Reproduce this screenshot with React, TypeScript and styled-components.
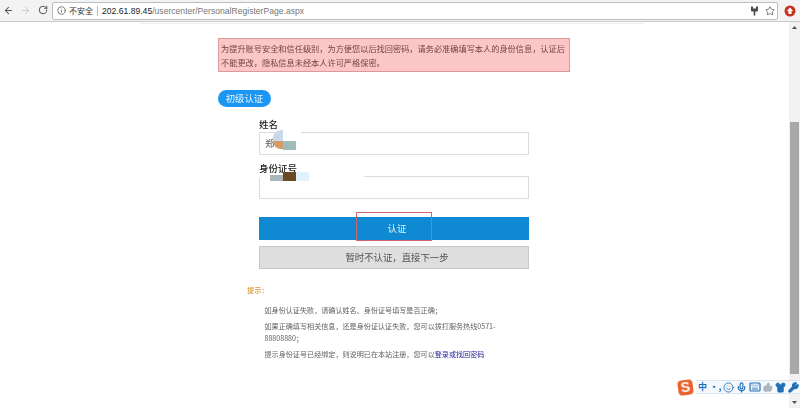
import React from "react";
import styled, { createGlobalStyle } from "styled-components";
import { ArrowLeft, ArrowRight, RotateCw, Info, Star, Mic, Keyboard, Shirt, Wrench, Smile, ThumbsUp } from "lucide-react";

const Global = createGlobalStyle`
  html, body { margin: 0; padding: 0; background: #fff; }
  body { font-family: "Noto Sans CJK SC", "Liberation Sans", sans-serif; }
  #root { width: 800px; height: 408px; overflow: hidden; }
`;

const Screen = styled.div`
  position: relative;
  width: 800px;
  height: 408px;
  display: flex;
  flex-direction: column;
  overflow: hidden;
  filter: blur(0.4px);
`;

const Toolbar = styled.div`
  height: 21px;
  flex: none;
  display: flex;
  align-items: center;
  background: #f3f3f3;
  border-bottom: 1px solid #c9c9c9;
`;

const NavButton = styled.div<{ $dim?: boolean }>`
  width: 17px;
  display: flex;
  justify-content: center;
  color: ${(p) => (p.$dim ? "#c8c8c8" : "#555")};
`;

const NavGroup = styled.div`
  display: flex;
  width: 52px;
  flex: none;
`;

const Omnibox = styled.div`
  width: 724px;
  height: 16px;
  flex: none;
  border: 1px solid #bdbdbd;
  border-radius: 2px;
  background: #fff;
  display: flex;
  align-items: center;
  color: #333;
`;

const InfoSlot = styled.div`
  display: flex;
  margin: 0 3px 0 4px;
  color: #555;
`;

const Insecure = styled.span`
  font-size: 8px;
  color: #333;
  padding-right: 4px;
  border-right: 1px solid #bbb;
  margin-right: 4px;
  line-height: 10px;
`;

const Host = styled.span`
  font-family: "Liberation Sans", sans-serif;
  font-size: 8.6px;
  color: #222;
`;

const Path = styled.span`
  font-family: "Liberation Sans", sans-serif;
  font-size: 8.6px;
  color: #777;
`;

const OmniRight = styled.div`
  margin-left: auto;
  display: flex;
  align-items: center;
  gap: 6px;
  padding-right: 2px;
  color: #555;
`;

const ExtensionSlot = styled.div`
  flex: 1;
  display: flex;
  justify-content: center;
  padding-left: 1px;
`;

const Viewport = styled.div`
  flex: 1;
  display: flex;
  min-height: 0;
`;

const Page = styled.div`
  flex: 1;
  min-width: 0;
`;

const Hairline = styled.div`
  height: 1px;
  margin: 1px 144px 0 140px;
  background: #efefef;
`;

const Column = styled.div`
  width: 352px;
  margin: 14px 0 0 218px;
`;

const Alert = styled.div`
  box-sizing: border-box;
  height: 34px;
  padding: 2px 2px 0;
  background: #fdc6c6;
  border: 1px solid #dd9a9a;
  color: #704442;
  font-size: 8.2px;
  line-height: 14px;
  white-space: nowrap;
`;

const Pill = styled.div`
  width: 53px;
  height: 17px;
  margin-top: 18px;
  border-radius: 9px;
  background: #1b96f2;
  color: #eaf5ff;
  font-size: 9.4px;
  line-height: 17px;
  text-align: center;
`;

const Form = styled.div`
  width: 270px;
  margin: 11px 0 0 41px;
`;

const Field = styled.div`
  position: relative;
  margin-bottom: 7px;
`;

const Label = styled.div`
  font-size: 9.5px;
  line-height: 12px;
  padding-bottom: 2px;
  font-weight: 500;
  color: #222;
`;

const Input = styled.div`
  box-sizing: border-box;
  height: 23px;
  border: 1px solid #dcdcdc;
  padding-left: 5px;
  font-size: 9.5px;
  line-height: 21px;
  color: #555;
`;

const Patch = styled.div<{ $x: number; $y: number; $w: number; $h: number; $c: string; $r?: string }>`
  position: absolute;
  left: ${(p) => p.$x}px;
  top: ${(p) => p.$y}px;
  width: ${(p) => p.$w}px;
  height: ${(p) => p.$h}px;
  background: ${(p) => p.$c};
  border-radius: ${(p) => p.$r || "0"};
`;

const Actions = styled.div`
  position: relative;
  margin-top: 18px;
  display: flex;
  flex-direction: column;
  gap: 6px;
`;

const Primary = styled.div`
  height: 23px;
  padding-left: 6px;
  background: #0f8ad2;
  color: #e6f4ff;
  font-size: 9.4px;
  line-height: 23px;
  text-align: center;
`;

const Secondary = styled.div`
  box-sizing: border-box;
  height: 23px;
  padding-left: 6px;
  background: #dedede;
  border: 1px solid #c8c8c8;
  color: #505050;
  font-size: 9.4px;
  line-height: 21px;
  text-align: center;
`;

const Highlight = styled.div`
  position: absolute;
  left: 97px;
  top: -5px;
  width: 76px;
  height: 29px;
  box-sizing: border-box;
  border: 1px solid #d0666e;
`;

const Tips = styled.div`
  margin: 15px 0 0 29px;
  width: 250px;
`;

const TipTitle = styled.div`
  font-size: 7.2px;
  line-height: 12px;
  font-weight: 500;
  color: #e09a3c;
  margin-bottom: 8px;
`;

const TipText = styled.p`
  margin: 0 0 4px 17.5px;
  width: 234px;
  font-size: 7.1px;
  line-height: 12px;
  color: #606060;
`;

const TipLink = styled.span`
  color: #1a1a96;
`;

const Scrollbar = styled.div`
  width: 11px;
  flex: none;
  display: flex;
  flex-direction: column;
  background: #f1f1f1;
`;

const ScrollButton = styled.div`
  height: 11px;
  display: flex;
  align-items: center;
  justify-content: center;
  color: #505050;
`;

const ScrollTrack = styled.div`
  flex: 1;
  padding: 89px 1px 23px 1px;
  display: flex;
`;

const ScrollThumb = styled.div`
  flex: 1;
  background: #a8a8a8;
`;

const Ime = styled.div`
  position: absolute;
  left: 678px;
  top: 379px;
  width: 122px;
  height: 16px;
  display: flex;
  align-items: center;
`;

const ImeLogo = styled.div`
  width: 15px;
  height: 15px;
  flex: none;
  margin-right: 3px;
  border-radius: 4px;
  background: #e8602a;
  color: #fff;
  font: 700 14px/15px "Liberation Sans", sans-serif;
  text-align: center;
  transform: rotate(-8deg);
`;

const ImeBar = styled.div`
  flex: 1;
  height: 14px;
  display: flex;
  background: #f6f9fc;
  border: 1px solid #dce6ee;
  border-width: 1px 0;
  box-sizing: border-box;
  color: #1f6fb8;
`;

const ImeSlot = styled.div`
  width: 13px;
  flex: none;
  display: flex;
  align-items: center;
  justify-content: center;
  font-size: 9px;
  font-weight: 700;
  line-height: 12px;
`;

const Arrow = ({ up }: { up?: boolean }) => (
  <svg width="7" height="5" viewBox="0 0 7 5" fill="currentColor">
    <path d={up ? "M3.5 1 L6 4 H1 Z" : "M1 1 H6 L3.5 4 Z"} />
  </svg>
);

const ExtensionIcon = () => (
  <svg width="12" height="12" viewBox="0 0 12 12">
    <circle cx="6" cy="6" r="5.5" fill="#c7301f" />
    <path d="M6 2.6 L9.2 6 H7.6 V9 H4.4 V6 H2.8 Z" fill="#fff" />
  </svg>
);

const ForkIcon = () => (
  <svg width="9" height="10" viewBox="0 0 9 10" fill="#4a4a4a">
    <path d="M1 0.5 H3 V2.5 H6 V0.5 H8 V4.5 Q8 5.5 7 5.5 H5.3 V9.5 H3.7 V5.5 H2 Q1 5.5 1 4.5 Z" />
  </svg>
);

export default function App() {
  return (
    <Screen>
      <Global />
      <Toolbar>
        <NavGroup>
          <NavButton><ArrowLeft size={11} strokeWidth={2.2} /></NavButton>
          <NavButton $dim><ArrowRight size={11} strokeWidth={2} /></NavButton>
          <NavButton><RotateCw size={10} strokeWidth={2.4} /></NavButton>
        </NavGroup>
        <Omnibox>
          <InfoSlot><Info size={9} strokeWidth={2} /></InfoSlot>
          <Insecure>不安全</Insecure>
          <Host>202.61.89.45</Host>
          <Path>/usercenter/PersonalRegisterPage.aspx</Path>
          <OmniRight>
            <ForkIcon />
            <Star size={10} strokeWidth={1.8} />
          </OmniRight>
        </Omnibox>
        <ExtensionSlot><ExtensionIcon /></ExtensionSlot>
      </Toolbar>
      <Viewport>
        <Page>
          <Hairline />
          <Column>
            <Alert>
              为提升账号安全和信任级别，为方便您以后找回密码，请务必准确填写本人的身份信息，认证后
              <br />
              不能更改，隐私信息未经本人许可严格保密。
            </Alert>
            <Pill>初级认证</Pill>
            <Form>
              <Field>
                <Label>姓名</Label>
                <Input>郑</Input>
                <Patch $x={14} $y={12} $w={10} $h={11} $c="#c9d9ec" $r="8px 0 0 0" />
                <Patch $x={24} $y={13} $w={18} $h={10} $c="#fff" />
                <Patch $x={14} $y={23} $w={10} $h={8} $c="#d49a68" $r="0 0 0 8px" />
                <Patch $x={24} $y={23} $w={13} $h={9} $c="#9dbdb8" />
              </Field>
              <Field>
                <Label>身份证号</Label>
                <Input />
                <Patch $x={0} $y={12} $w={105} $h={4} $c="#fff" />
                <Patch $x={11} $y={13} $w={13} $h={6} $c="#a9b5b8" />
                <Patch $x={24} $y={10} $w={13} $h={9} $c="#6a4a22" />
                <Patch $x={37} $y={10} $w={13} $h={9} $c="#e0f2fb" />
              </Field>
              <Actions>
                <Primary>认证</Primary>
                <Secondary>暂时不认证，直接下一步</Secondary>
                <Highlight />
              </Actions>
            </Form>
            <Tips>
              <TipTitle>提示：</TipTitle>
              <TipText>如身份认证失败，请确认姓名、身份证号填写是否正确；</TipText>
              <TipText>如果正确填写相关信息，还是身份证认证失败，您可以拨打服务热线0571-88808880；</TipText>
              <TipText>提示身份证号已经绑定，则说明已在本站注册，您可以<TipLink>登录或找回密码</TipLink></TipText>
            </Tips>
          </Column>
        </Page>
        <Scrollbar>
          <ScrollButton><Arrow up /></ScrollButton>
          <ScrollTrack><ScrollThumb /></ScrollTrack>
          <ScrollButton><Arrow /></ScrollButton>
        </Scrollbar>
      </Viewport>
      <Ime>
        <ImeLogo>S</ImeLogo>
        <ImeBar>
          <ImeSlot>中</ImeSlot>
          <ImeSlot>•,</ImeSlot>
          <ImeSlot><Smile size={11} strokeWidth={1.8} /></ImeSlot>
          <ImeSlot><Mic size={11} strokeWidth={2.6} /></ImeSlot>
          <ImeSlot><Keyboard size={12} strokeWidth={2.4} /></ImeSlot>
          <ImeSlot><ThumbsUp size={10} color="#a9b6c0" fill="#a9b6c0" /></ImeSlot>
          <ImeSlot><Shirt size={11} fill="#1f6fb8" /></ImeSlot>
          <ImeSlot><Wrench size={11} strokeWidth={3} fill="#1f6fb8" /></ImeSlot>
        </ImeBar>
      </Ime>
    </Screen>
  );
}
